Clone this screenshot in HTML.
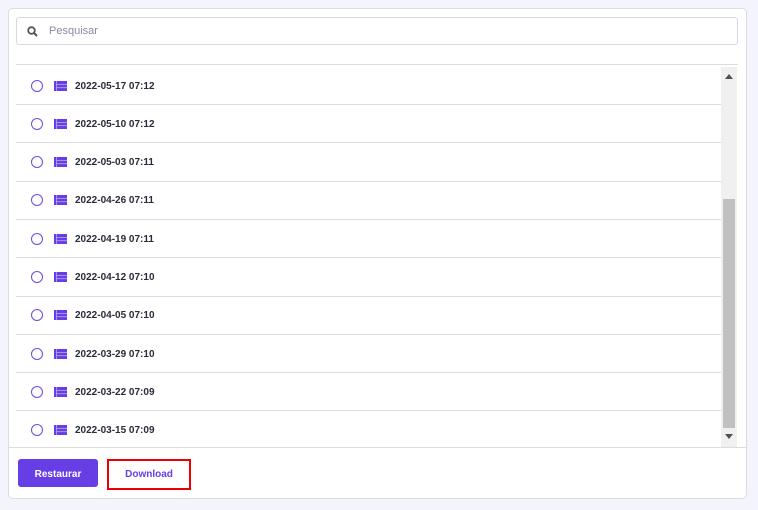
<!DOCTYPE html>
<html><head><meta charset="utf-8"><style>
*{margin:0;padding:0;box-sizing:border-box}
body{width:758px;height:510px;background:#f4f4fc;font-family:"Liberation Sans",sans-serif;position:relative;overflow:hidden}
.card{position:absolute;left:8px;top:8px;width:739px;height:491px;background:#fff;border:1px solid #dcdce6;border-radius:5px}
.search{position:absolute;left:16px;top:17px;width:722px;height:28px;border:1px solid #d8d8e0;border-radius:3px}
.search span{position:absolute;left:32px;top:7px;font-size:11px;line-height:12px;color:#8a8aa0}
.hl{position:absolute;height:1px;background:#dcdcdc}
.circ{position:absolute;width:12px;height:12px;border:1.5px solid #7048e0;border-radius:50%}
.ic{position:absolute;width:13px;height:10px}
.t{position:absolute;font-size:10px;line-height:12px;font-weight:bold;color:#2a2a3a}
.sb{position:absolute;left:721px;top:67px;width:16px;height:380px;background:#f0f0f0}
.thumb{position:absolute;left:2px;top:132px;width:12px;height:229px;background:#c0c0c0}
.btn1{position:absolute;left:18px;top:459px;width:80px;height:28px;background:#673de6;border-radius:3px;color:#fff;font-size:10px;font-weight:bold;text-align:center;line-height:28px;padding-top:2px}
.btn2{position:absolute;left:107px;top:459px;width:84px;height:31px;border:2px solid #e00;color:#673de6;font-size:10px;font-weight:bold;text-align:center;line-height:26px;padding-top:1px}
</style></head><body>
<div class="card"></div>
<div class="search">
<svg style="position:absolute;left:10px;top:8px" width="11" height="11" viewBox="0 0 11 11"><circle cx="4.5" cy="4.5" r="3.3" fill="none" stroke="#555" stroke-width="1.8"/><line x1="7" y1="7" x2="10" y2="10" stroke="#555" stroke-width="2"/></svg>
<span>Pesquisar</span></div>
<div class="hl" style="left:16px;top:64px;width:722px"></div>
<div id="rows"></div>
<div class="sb"><div class="thumb"></div>
<svg style="position:absolute;left:4px;top:7px" width="8" height="5"><polygon points="0,5 4,0 8,5" fill="#505050"/></svg>
<svg style="position:absolute;left:4px;top:367px" width="8" height="5"><polygon points="0,0 8,0 4,5" fill="#505050"/></svg>
</div>
<div class="hl" style="left:8px;top:447px;width:739px"></div>
<div class="btn1">Restaurar</div>
<div class="btn2">Download</div>
<script>
var d=["2022-05-17 07:12","2022-05-10 07:12","2022-05-03 07:11","2022-04-26 07:11","2022-04-19 07:11","2022-04-12 07:10","2022-04-05 07:10","2022-03-29 07:10","2022-03-22 07:09","2022-03-15 07:09"];
var h="";
for(var i=0;i<10;i++){var c=85.5+38.3*i;
h+='<div class="circ" style="left:31px;top:'+(c-6)+'px"></div>';
h+='<svg class="ic" style="left:54px;top:'+(c-5)+'px" viewBox="0 0 13 10"><rect width="13" height="10" fill="#673de6"/><rect x="2" y="3" width="11" height="0.8" fill="#b8a8f0"/><rect x="2" y="6.3" width="11" height="0.8" fill="#b8a8f0"/><rect x="2" y="0" width="0.8" height="10" fill="#b8a8f0"/></svg>';
h+='<div class="t" style="left:75px;top:'+(c-5)+'px">'+d[i]+'</div>';
if(i<9)h+='<div class="hl" style="left:16px;width:705px;top:'+Math.round(104+38.3*i)+'px"></div>';}
document.getElementById("rows").innerHTML=h;
</script>
</body></html>
